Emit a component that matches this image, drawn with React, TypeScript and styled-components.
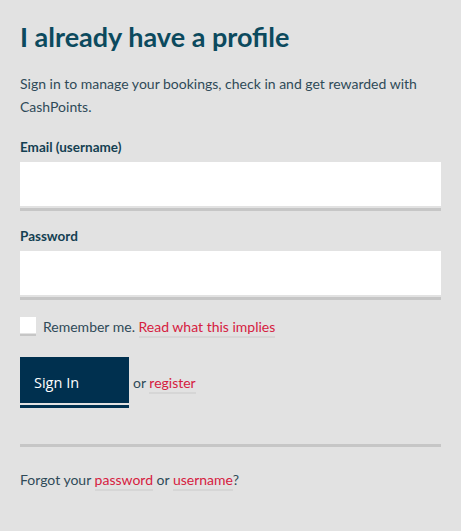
import styled, { createGlobalStyle } from "styled-components";

const GlobalStyle = createGlobalStyle`
  html, body {
    margin: 0;
    padding: 0;
    background: #e2e2e2;
  }
  body {
    font-family: "Lato", "Noto Sans", sans-serif;
    color: #2f4a58;
  }
  * { box-sizing: border-box; }
`;

const Page = styled.div`
  width: 461px;
  min-height: 531px;
  padding: 22px 20px 0 20px;
  background: #e2e2e2;
`;

const Title = styled.h1`
  margin: 0;
  font-size: 27px;
  line-height: 30px;
  font-weight: 700;
  color: #0c4a5e;
`;

const Intro = styled.p`
  margin: 20px 0 0 0;
  font-size: 14px;
  line-height: 23px;
  color: #2f4a58;
`;

const Field = styled.div<{ $top: number }>`
  display: flex;
  flex-direction: column;
  margin-top: ${(p) => p.$top}px;
`;

const Label = styled.label`
  font-size: 13.5px;
  line-height: 16px;
  font-weight: 700;
  color: #143f52;
  margin-bottom: 7px;
`;

const Input = styled.input`
  width: 421px;
  height: 44px;
  border: none;
  outline: none;
  background: #fff;
  margin: 0;
  padding: 0 12px;
  font: inherit;
`;

const Underline = styled.div`
  width: 421px;
  height: 3px;
  margin-top: 2px;
  background: #c6c6c6;
`;

const RememberRow = styled.div`
  display: flex;
  align-items: flex-start;
  margin-top: 17px;
  gap: 7px;
`;

const CheckWrap = styled.div`
  display: flex;
  flex-direction: column;
`;

const CheckBox = styled.div`
  width: 16px;
  height: 16px;
  background: #fff;
`;

const CheckLine = styled.div`
  width: 16px;
  height: 2px;
  margin-top: 1px;
  background: #c6c6c6;
`;

const Text = styled.span`
  font-size: 14px;
  line-height: 19px;
  color: #2f4a58;
`;

const Link = styled.a`
  color: #d6203f;
  text-decoration: none;
  border-bottom: 2px solid #d6d6d6;
  padding-bottom: 1px;
`;

const ActionRow = styled.div`
  display: flex;
  align-items: center;
  margin-top: 21px;
  gap: 4px;
`;

const ButtonWrap = styled.div`
  display: flex;
  flex-direction: column;
`;

const SignInButton = styled.button`
  width: 109px;
  height: 46px;
  border: none;
  background: #00304f;
  color: #fff;
  font-family: "Open Sans", "Noto Sans", sans-serif;
  font-size: 14.5px;
  text-align: left;
  padding: 4px 0 0 14px;
  cursor: pointer;
`;

const ButtonLine = styled.div`
  width: 109px;
  height: 3px;
  margin-top: 2px;
  background: #00304f;
`;

const Divider = styled.hr`
  width: 421px;
  height: 3px;
  border: none;
  margin: 36px 0 0 0;
  background: #c6c6c6;
`;

const Footer = styled.p`
  margin: 23px 0 0 0;
  font-size: 14px;
  line-height: 19px;
  color: #2f4a58;
`;

export default function App() {
  return (
    <>
      <GlobalStyle />
      <Page>
        <Title>I already have a profile</Title>
        <Intro>
          Sign in to manage your bookings, check in and get rewarded with CashPoints.
        </Intro>

        <Field $top={21}>
          <Label>Email (username)</Label>
          <Input type="text" />
          <Underline />
        </Field>

        <Field $top={17}>
          <Label>Password</Label>
          <Input type="password" />
          <Underline />
        </Field>

        <RememberRow>
          <CheckWrap>
            <CheckBox />
            <CheckLine />
          </CheckWrap>
          <Text>
            Remember me. <Link href="#">Read what this implies</Link>
          </Text>
        </RememberRow>

        <ActionRow>
          <ButtonWrap>
            <SignInButton>Sign In</SignInButton>
            <ButtonLine />
          </ButtonWrap>
          <Text>
            or <Link href="#">register</Link>
          </Text>
        </ActionRow>

        <Divider />

        <Footer>
          Forgot your <Link href="#">password</Link> or <Link href="#">username</Link>?
        </Footer>
      </Page>
    </>
  );
}
